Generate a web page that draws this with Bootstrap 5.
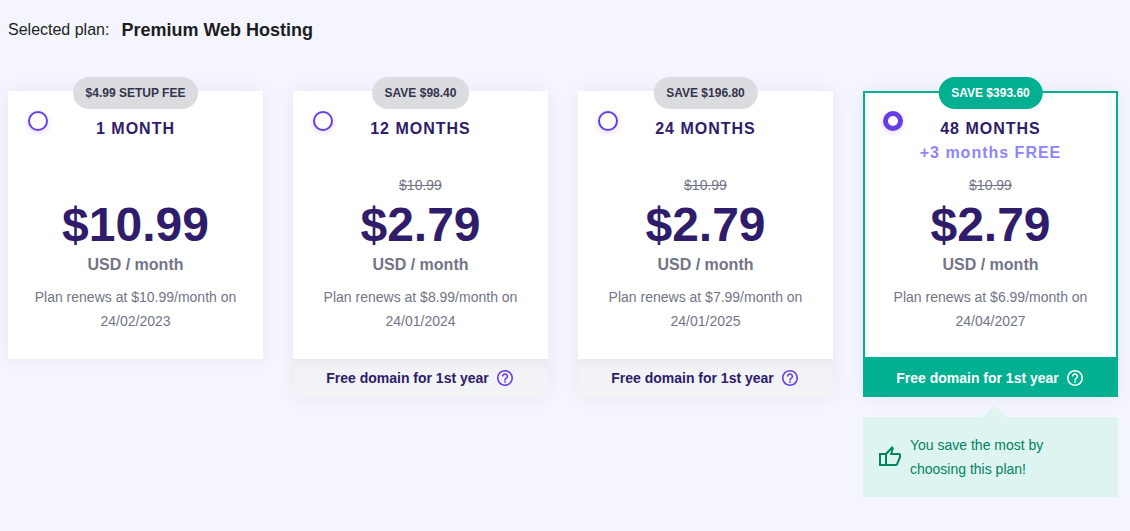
<!DOCTYPE html>
<html lang="en">
<head>
<meta charset="utf-8">
<meta name="viewport" content="width=device-width, initial-scale=1">
<title>Choose a period</title>
<link href="https://cdn.jsdelivr.net/npm/bootstrap@5.3.0/dist/css/bootstrap.min.css" rel="stylesheet">
<style>
  body { background: #f4f5ff; color: #1d1e20; font-family: "Liberation Sans", Arial, sans-serif; font-size: 16px; line-height: 24px; }
  .page { padding: 16px 12px 24px 8px; }
  .plan-name { font-size: 18px; line-height: 28px; }
  .periods { --bs-gutter-x: 30px; --bs-gutter-y: 40px; margin-top: 7px; }
  .period { box-shadow: 0 0 18px rgba(29, 30, 32, .06); }
  .period-body { min-height: 268px; padding: 26px 20px; background: #fff; }
  .period-tag { top: -14px; padding: 4px 13px; background: #dadce0; color: #36344d; font-size: 12px; font-weight: 700; }
  .period-radio { appearance: none; top: 20px; left: 20px; width: 20px; height: 20px; margin: 0; border: 2px solid #673de6; border-radius: 50%; background: #fff; box-shadow: 0 2px 6px rgba(103, 61, 230, .2); }
  .period-radio:checked { border-width: 5px; }
  .period-title { color: #2f1c6a; letter-spacing: 1px; }
  .period-bonus { height: 24px; color: #8c85ff; letter-spacing: 1px; }
  .old-price { height: 24px; margin-top: 8px; }
  .muted { color: #727586; }
  .fine { font-size: 14px; }
  .price { color: #2f1c6a; font-size: 48px; line-height: 48px; margin: 4px 0; }
  .renewal { margin-top: 8px; }
  .perk { height: 38px; padding-right: 2px; background: linear-gradient(#ebebef, #f2f3f6 12px); color: #2f1c6a; }
  .perk-help { color: #673de6; }
  .best .period-body { box-shadow: inset 0 0 0 2px #00b090; }
  .best .period-tag, .best .perk { background: #00b090; color: #fff; }
  .best .perk-help { color: #fff; }
  .callout { margin-top: 20px; padding: 16px 15px; background: #def4f0; color: #008361; }
  .callout-arrow { top: -12px; left: 50%; margin-left: -8px; width: 24px; height: 12px; background: #def4f0; clip-path: polygon(50% 0, 100% 100%, 0 100%); }
</style>
<script src="https://cdn.jsdelivr.net/npm/bootstrap@5.3.0/dist/js/bootstrap.bundle.min.js" defer></script>
</head>
<body>
<svg class="d-none" aria-hidden="true">
  <symbol id="help" viewBox="2 2 20 20"><path fill="currentColor" d="M11 18h2v-2h-2v2zm1-16C6.480 2 2 6.480 2 12s4.480 10 10 10 10-4.480 10-10S17.520 2 12 2zm0 18c-4.410 0-8-3.590-8-8s3.590-8 8-8 8 3.590 8 8-3.590 8-8 8zm0-14c-2.210 0-4 1.790-4 4h2c0-1.100.9-2 2-2s2 .9 2 2c0 2-3 1.750-3 5h2c0-2.250 3-2.500 3-5 0-2.210-1.790-4-4-4z"/></symbol>
</svg>
<main class="page">
  <div class="d-flex align-items-center flex-wrap">
    <span class="me-2 pe-1">Selected plan:</span>
    <h1 class="plan-name fw-bold mb-0">Premium Web Hosting</h1>
  </div>
  <form class="row row-cols-1 row-cols-sm-2 row-cols-lg-4 periods align-items-start">
    <div class="col">
      <div class="period">
        <div class="period-body position-relative text-center">
          <span class="period-tag rounded-pill position-absolute start-50 translate-middle-x text-nowrap">$4.99 SETUP FEE</span>
          <input class="period-radio position-absolute" type="radio" name="period" id="p1">
          <label class="period-title fw-bold d-block" for="p1">1 MONTH</label>
          <div class="period-bonus"></div>
          <div class="old-price"></div>
          <div class="price fw-bold">$10.99</div>
          <div class="muted fw-bold">USD / month</div>
          <p class="renewal muted fine mb-0">Plan renews at $10.99/month on 24/02/2023</p>
        </div>
      </div>
    </div>
    <div class="col">
      <div class="period">
        <div class="period-body position-relative text-center">
          <span class="period-tag rounded-pill position-absolute start-50 translate-middle-x text-nowrap">SAVE $98.40</span>
          <input class="period-radio position-absolute" type="radio" name="period" id="p12">
          <label class="period-title fw-bold d-block" for="p12">12 MONTHS</label>
          <div class="period-bonus"></div>
          <div class="old-price muted fine"><s>$10.99</s></div>
          <div class="price fw-bold">$2.79</div>
          <div class="muted fw-bold">USD / month</div>
          <p class="renewal muted fine mb-0">Plan renews at $8.99/month on 24/01/2024</p>
        </div>
        <div class="perk fine fw-bold d-flex align-items-center justify-content-center gap-2">Free domain for 1st year <svg class="perk-help" width="16" height="16" aria-hidden="true"><use href="#help"/></svg></div>
      </div>
    </div>
    <div class="col">
      <div class="period">
        <div class="period-body position-relative text-center">
          <span class="period-tag rounded-pill position-absolute start-50 translate-middle-x text-nowrap">SAVE $196.80</span>
          <input class="period-radio position-absolute" type="radio" name="period" id="p24">
          <label class="period-title fw-bold d-block" for="p24">24 MONTHS</label>
          <div class="period-bonus"></div>
          <div class="old-price muted fine"><s>$10.99</s></div>
          <div class="price fw-bold">$2.79</div>
          <div class="muted fw-bold">USD / month</div>
          <p class="renewal muted fine mb-0">Plan renews at $7.99/month on 24/01/2025</p>
        </div>
        <div class="perk fine fw-bold d-flex align-items-center justify-content-center gap-2">Free domain for 1st year <svg class="perk-help" width="16" height="16" aria-hidden="true"><use href="#help"/></svg></div>
      </div>
    </div>
    <div class="col">
      <div class="period best">
        <div class="period-body position-relative text-center">
          <span class="period-tag rounded-pill position-absolute start-50 translate-middle-x text-nowrap">SAVE $393.60</span>
          <input class="period-radio position-absolute" type="radio" name="period" id="p48" checked>
          <label class="period-title fw-bold d-block" for="p48">48 MONTHS</label>
          <div class="period-bonus fw-bold">+3 months FREE</div>
          <div class="old-price muted fine"><s>$10.99</s></div>
          <div class="price fw-bold">$2.79</div>
          <div class="muted fw-bold">USD / month</div>
          <p class="renewal muted fine mb-0">Plan renews at $6.99/month on 24/04/2027</p>
        </div>
        <div class="perk fine fw-bold d-flex align-items-center justify-content-center gap-2">Free domain for 1st year <svg class="perk-help" width="16" height="16" aria-hidden="true"><use href="#help"/></svg></div>
      </div>
      <div class="callout fine position-relative d-flex align-items-center gap-2">
        <span class="callout-arrow position-absolute"></span>
        <svg class="flex-shrink-0" width="24" height="24" viewBox="0 0 24 24" fill="none" stroke="currentColor" stroke-width="2" aria-hidden="true"><path d="M2 9h6v11H2zM8 9l6-6.500.700.900L13.200 9H21q1 0 1 1v2l-3 7.400q-.3.600-1 .600H8z"/></svg>
        <span class="callout-text">You save the most by<br>choosing this plan!</span>
      </div>
    </div>
  </form>
</main>
</body>
</html>
